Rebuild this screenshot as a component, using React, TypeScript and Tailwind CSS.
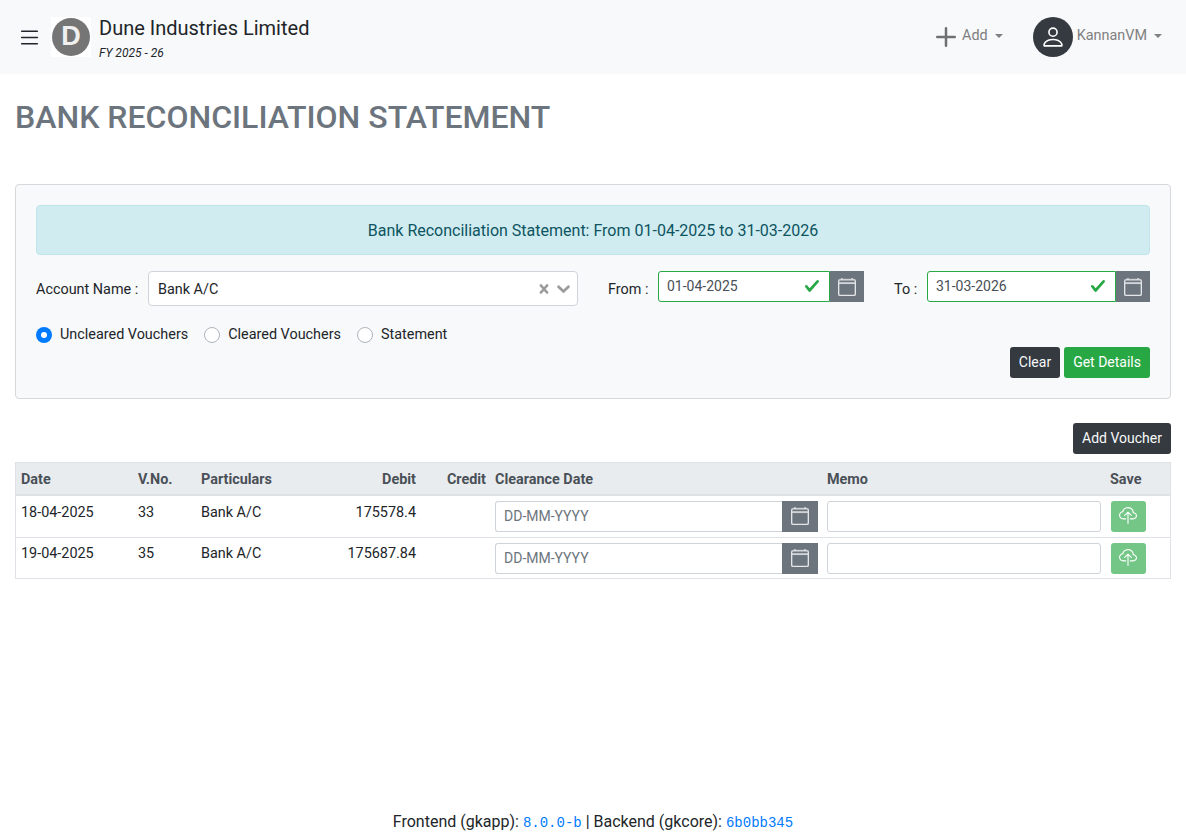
import { BsList, BsPlus, BsPerson, BsCalendar4, BsCloudUpload } from "react-icons/bs";

const rows = [
  { date: "18-04-2025", no: "33", name: "Bank A/C", debit: "175578.4" },
  { date: "19-04-2025", no: "35", name: "Bank A/C", debit: "175687.84" },
];

function Caret() {
  return <span className="ml-[7px] inline-block border-x-[4px] border-t-[4px] border-x-transparent border-t-current" />;
}

function Addon({ narrow }: { narrow?: boolean }) {
  return (
    <span
      className={`flex h-full shrink-0 items-center justify-center bg-[#6c757d] text-[#e4e7ea] ${narrow ? "w-[34px]" : "w-[36px]"}`}
    >
      <BsCalendar4 size={18} className="stroke-current stroke-[0.35]" />
    </span>
  );
}

function DateField({ value, width }: { value: string; width: string }) {
  return (
    <div className={`flex h-[31px] text-[14px] ${width}`}>
      <div className="flex min-w-0 flex-1 items-start justify-between rounded-l-[3px] border border-[#28a745] bg-white pl-[8px] pr-[9px] pt-[4px] text-[#495057]">
        <span>{value}</span>
        <svg viewBox="0 0 8 8" className="mt-[2px] h-[16px] w-[16px] fill-[#28a745]">
          <path d="M2.3 6.73L.6 4.53c-.4-1.04.46-1.4 1.1-.8l1.1 1.4 3.4-3.8c.6-.63 1.6-.27 1.2.7l-4 4.6c-.43.5-.8.4-1.1.1z" />
        </svg>
      </div>
      <Addon narrow />
    </div>
  );
}

function Radio({ label, checked }: { label: string; checked?: boolean }) {
  return (
    <label className="flex items-center gap-[8px]">
      {checked ? (
        <span className="flex h-[16px] w-[16px] items-center justify-center rounded-full bg-[#007bff]">
          <span className="h-[6px] w-[6px] rounded-full bg-white" />
        </span>
      ) : (
        <span className="h-[16px] w-[16px] rounded-full border border-[#adb5bd] bg-white" />
      )}
      <span>{label}</span>
    </label>
  );
}

export default function App() {
  return (
    <div className="flex min-h-[837px] flex-col bg-white font-['Roboto',sans-serif] text-[14.4px] leading-[21.6px] text-[#212529]">
      <header className="flex h-[74px] items-center bg-[#f8f9fa] pl-[17px] pr-[24px]">
        <BsList size={25} className="text-[#212529]" />
        <div className="ml-[9px] flex h-[40px] w-[40px] items-center justify-center bg-white">
          <div className="flex h-[38px] w-[38px] items-center justify-center rounded-full bg-[#757575] font-['Liberation_Sans',sans-serif] text-[27px] font-bold text-[#f0f0f0]">
            D
          </div>
        </div>
        <div className="ml-[8px] pt-[4px]">
          <div className="text-[20px] leading-[24px]">Dune Industries Limited</div>
          <div className="mt-[4px] text-[12px] italic leading-[18px]">FY 2025 - 26</div>
        </div>
        <div className="ml-auto flex items-center text-[#7f8081]">
          <BsPlus size={40} className="-ml-[10px] -mr-[12px] text-[#6f7071]" />
          <span className="mb-[2px] ml-[8px] flex items-center">
            Add
            <Caret />
          </span>
        </div>
        <div className="ml-[30px] flex items-center text-[#7f8081]">
          <span className="flex h-[40px] w-[40px] items-center justify-center rounded-full bg-[#343a40] text-white">
            <BsPerson size={26} />
          </span>
          <span className="mb-[2px] ml-[4px] flex items-center">
            KannanVM
            <Caret />
          </span>
        </div>
      </header>

      <main className="px-[15px]">
        <h2 className="mt-[24px] text-[32px] font-medium leading-[38px] text-[#6c757d]">
          BANK RECONCILIATION STATEMENT
        </h2>

        <section className="mt-[48px] rounded-[4px] border border-[#d6d8db] bg-[#f8f9fa] p-[20px]">
          <div className="rounded-[4px] border border-[#bee5eb] bg-[#d1ecf1] pb-[11px] pt-[13px] text-center text-[16px] leading-[24px] text-[#0c5460]">
            Bank Reconciliation Statement: From 01-04-2025 to 31-03-2026
          </div>

          <div className="mt-[16px] flex items-start">
            <span className="mt-[8px] w-[112px]">Account Name :</span>
            <div className="flex h-[35px] w-[430px] items-center justify-between rounded-[4px] border border-[#ced4da] bg-white pl-[9px] pr-[3px]">
              <span className="pt-[2px]">Bank A/C</span>
              <span className="flex items-center text-[#999999]">
                <svg viewBox="0 0 20 20" className="h-[18px] w-[18px] fill-current stroke-current stroke-[0.5]">
                  <path d="M14.348 14.849c-0.469 0.469-1.229 0.469-1.697 0l-2.651-3.030-2.651 3.029c-0.469 0.469-1.229 0.469-1.697 0-0.469-0.469-0.469-1.229 0-1.697l2.758-3.15-2.759-3.152c-0.469-0.469-0.469-1.228 0-1.697s1.228-0.469 1.697 0l2.652 3.031 2.651-3.031c0.469-0.469 1.228-0.469 1.697 0s0.469 1.229 0 1.697l-2.758 3.152 2.758 3.15c0.469 0.469 0.469 1.229 0 1.698z" />
                </svg>
                <svg viewBox="0 0 20 20" className="h-[21px] w-[21px] fill-current stroke-current stroke-[0.5]">
                  <path d="M4.516 7.548c0.436-0.446 1.043-0.481 1.576 0l3.908 3.747 3.908-3.747c0.533-0.481 1.141-0.446 1.576 0 0.436 0.445 0.408 1.197 0 1.615-0.406 0.418-4.695 4.502-4.695 4.502-0.217 0.223-0.502 0.335-0.789 0.335s-0.572-0.112-0.79-0.335c0 0-4.287-4.084-4.695-4.502s-0.436-1.17 0-1.615z" />
                </svg>
              </span>
            </div>
            <span className="ml-[30px] mt-[8px] w-[50px]">From :</span>
            <DateField value="01-04-2025" width="w-[206px]" />
            <span className="ml-[30px] mt-[8px] w-[33px]">To :</span>
            <DateField value="31-03-2026" width="w-[223px]" />
          </div>

          <div className="mt-[18px] flex gap-[16px]">
            <Radio label="Uncleared Vouchers" checked />
            <Radio label="Cleared Vouchers" />
            <Radio label="Statement" />
          </div>

          <div className="mt-[1.4px] flex justify-end gap-[4px] text-[14px]">
            <button className="h-[31px] rounded-[3px] bg-[#343a40] px-[9px] text-[#f8f9fa]">Clear</button>
            <button className="h-[31px] rounded-[3px] bg-[#28a745] px-[9px] text-white">Get Details</button>
          </div>
        </section>

        <div className="mt-[24px] flex justify-end text-[14px]">
          <button className="h-[31px] rounded-[3px] bg-[#343a40] px-[9px] text-[#f8f9fa]">Add Voucher</button>
        </div>

        <table className="mt-[8px] w-full table-fixed border border-[#dee2e6]">
          <colgroup>
            <col className="w-[117.5px]" />
            <col className="w-[63px]" />
            <col className="w-[125px]" />
            <col className="w-[100px]" />
            <col className="w-[70px]" />
            <col className="w-[331.5px]" />
            <col className="w-[283px]" />
            <col />
          </colgroup>
          <thead>
            <tr className="border-b-2 border-[#dee2e6] bg-[#e9ecef] text-[#495057]">
              <th className="px-[5px] pb-[3.4px] pt-[6px] text-left font-bold">Date</th>
              <th className="px-[5px] pb-[3.4px] pt-[6px] text-left font-bold">V.No.</th>
              <th className="px-[5px] pb-[3.4px] pt-[6px] text-left font-bold">Particulars</th>
              <th className="px-[5px] pb-[3.4px] pt-[6px] text-right font-bold">Debit</th>
              <th className="px-[5px] pb-[3.4px] pt-[6px] text-right font-bold">Credit</th>
              <th className="pb-[3.4px] pl-[4px] pr-[5px] pt-[6px] text-left font-bold">Clearance Date</th>
              <th className="pb-[3.4px] pl-[4.5px] pr-[5px] pt-[6px] text-left font-bold">Memo</th>
              <th className="pb-[3.4px] pl-[4.5px] pr-[5px] pt-[6px] text-left font-bold">Save</th>
            </tr>
          </thead>
          <tbody>
            {rows.map((row) => (
              <tr key={row.no} className="border-b border-[#dee2e6] align-top [&:last-child>td]:pb-[4px] [&:last-child>td]:pt-[5px]">
                <td className="px-[5px] pt-[6px]">{row.date}</td>
                <td className="px-[5px] pt-[6px]">{row.no}</td>
                <td className="px-[5px] pt-[6px]">{row.name}</td>
                <td className="px-[5px] pt-[6px] text-right">{row.debit}</td>
                <td className="p-[5px]" />
                <td className="py-[5px] pl-[3.5px] pr-[5px]">
                  <div className="flex h-[31px] text-[14px]">
                    <div className="flex-1 rounded-l-[3px] border border-r-0 border-[#ced4da] bg-white pl-[8.5px] pt-[4px] text-[#6c757d]">
                      DD-MM-YYYY
                    </div>
                    <Addon />
                  </div>
                </td>
                <td className="py-[5px] pl-[4px] pr-[5px]">
                  <div className="h-[31px] rounded-[3px] border border-[#ced4da] bg-white" />
                </td>
                <td className="p-[5px]">
                  <button className="flex h-[31px] w-[35px] items-center justify-center rounded-[3px] bg-[#74c687] text-white">
                    <BsCloudUpload size={18} />
                  </button>
                </td>
              </tr>
            ))}
          </tbody>
        </table>
      </main>

      <footer className="mt-auto pb-[2px] text-center text-[16px] leading-[24px]">
        Frontend (gkapp): <code className="font-['Liberation_Mono',monospace] text-[14px] text-[#007bff]">8.0.0-b</code> | Backend
        (gkcore): <code className="font-['Liberation_Mono',monospace] text-[14px] text-[#007bff]">6b0bb345</code>
      </footer>
    </div>
  );
}
